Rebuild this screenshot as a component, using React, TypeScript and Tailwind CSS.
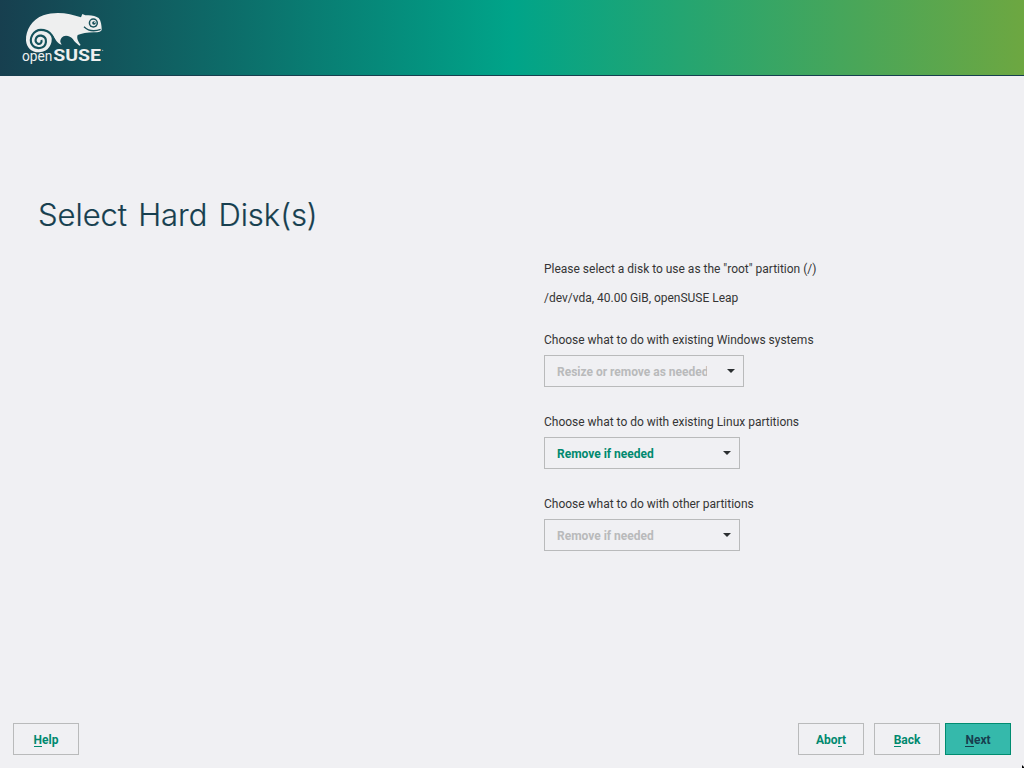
import type { ReactNode } from "react";

function Logo() {
  return (
    <svg className="h-[75px] w-[110px]" viewBox="0 0 330 225" fill="#eeefef">
      <path d="M88 157 C66 158 50 144 48 122 C47 90 66 58 100 46 C140 32 180 41 213 52 L217 42 L226 46 C240 44 258 47 266 54 C273 62 275 76 275 88 C275 96 266 97 252 97 C232 97 214 101 203 105 C199 114 205 126 212 135 L208 137 C200 131 193 125 189 118 C184 111 176 107 168 107 C157 107 150 117 151 126 L155 134 C143 132 137 119 130 108 L124 108 C130 132 114 156 88 157 Z" />
      <path d="M131 118 C122 88 83 79 67 105 C54 128 71 147 90 144 C111 141 115 112 94 107 C78 104 71 124 83 131 C90 134 97 128 94 120" fill="none" stroke="#15525b" strokeWidth="6.5" />
      <circle cx="250" cy="69" r="14" fill="#16505a" />
      <circle cx="250" cy="69" r="9.5" />
      <circle cx="252" cy="69" r="5.5" fill="#16505a" />
      <circle cx="254" cy="67" r="2" />
      <path d="M222 80 C235 93 253 95 272 88" fill="none" stroke="#16505a" strokeWidth="4" />
      <text x="36" y="184" fontFamily="Roboto, sans-serif" fontSize="42" textLength="91" lengthAdjust="spacingAndGlyphs">open</text>
      <text x="130" y="184" fontFamily="Roboto, sans-serif" fontWeight="700" fontSize="48" textLength="143" lengthAdjust="spacingAndGlyphs">SUSE</text>
      <circle cx="278" cy="151" r="2" opacity=".6" />
    </svg>
  );
}

function Select({ label, value, width, active }: { label: string; value: string; width: string; active?: boolean }) {
  return (
    <div className="flex h-[82px] flex-col items-start">
      <div className="h-[23px] leading-4">{label}</div>
      <div className={`flex h-8 items-center justify-between border border-[#b9babb] pr-2 pl-3 font-bold ${width} ${active ? "text-[#00896f]" : "text-[#b9babb]"}`}>
        <span className="max-w-[150px] overflow-hidden pt-0.5 whitespace-nowrap">{value}</span>
        <svg className="h-1 w-2" viewBox="0 0 8 4" fill="#2b2f31"><path d="M0 0H8L4 4Z" /></svg>
      </div>
    </div>
  );
}

function Button({ children, primary }: { children: ReactNode; primary?: boolean }) {
  return (
    <button className={`h-8 w-[66px] border pt-px text-center font-bold ${primary ? "border-[#008c70] bg-[#35b9ab] text-[#173f4f]" : "border-[#b9babb] text-[#00896f]"}`}>
      {children}
    </button>
  );
}

function Key({ children }: { children: ReactNode }) {
  return <span className="inline-block h-[14px] border-b border-current leading-[15px]">{children}</span>;
}

export default function App() {
  return (
    <div className="relative flex h-[768px] w-[1024px] flex-col overflow-hidden bg-[#f0f0f3] font-[Roboto,sans-serif] text-[12px] tracking-[-0.01px] text-[#353535]">
      <header className="h-[76px] shrink-0 border-b border-[#173f4f] bg-[linear-gradient(90deg,#173f4f,#00a489_50%,#6da741)] pl-[10px]">
        <Logo />
      </header>
      <h1 className="mt-[115px] ml-[38px] h-12 font-[Inter,sans-serif] text-[31px] leading-12 font-light tracking-[-0.05px] text-[#173f4f] [word-spacing:2.5px] [-webkit-text-stroke:0.2px]">Select Hard Disk(s)</h1>
      <main className="mt-[22px] ml-[544px] flex-1 leading-4">
        <p className="h-[29px]">Please select a disk to use as the "root" partition (/)</p>
        <p className="h-[42px]">/dev/vda, 40.00 GiB, openSUSE Leap</p>
        <Select label="Choose what to do with existing Windows systems" value="Resize or remove as needed" width="w-[200px]" />
        <Select label="Choose what to do with existing Linux partitions" value="Remove if needed" width="w-[196px]" active />
        <Select label="Choose what to do with other partitions" value="Remove if needed" width="w-[196px]" />
      </main>
      <footer className="mb-[13px] flex h-8 shrink-0 pr-[13px] pl-[13px]">
        <Button><Key>H</Key>elp</Button>
        <div className="ml-auto flex">
          <Button>Abo<Key>r</Key>t</Button>
          <div className="mr-[5px] ml-[10px]"><Button><Key>B</Key>ack</Button></div>
          <Button primary><Key>N</Key>ext</Button>
        </div>
      </footer>
      <svg className="absolute right-0 bottom-0 h-[3px] w-[2px]" viewBox="0 0 2 3"><path d="M0 0L2 2V3H0Z" fill="#000" /></svg>
    </div>
  );
}
